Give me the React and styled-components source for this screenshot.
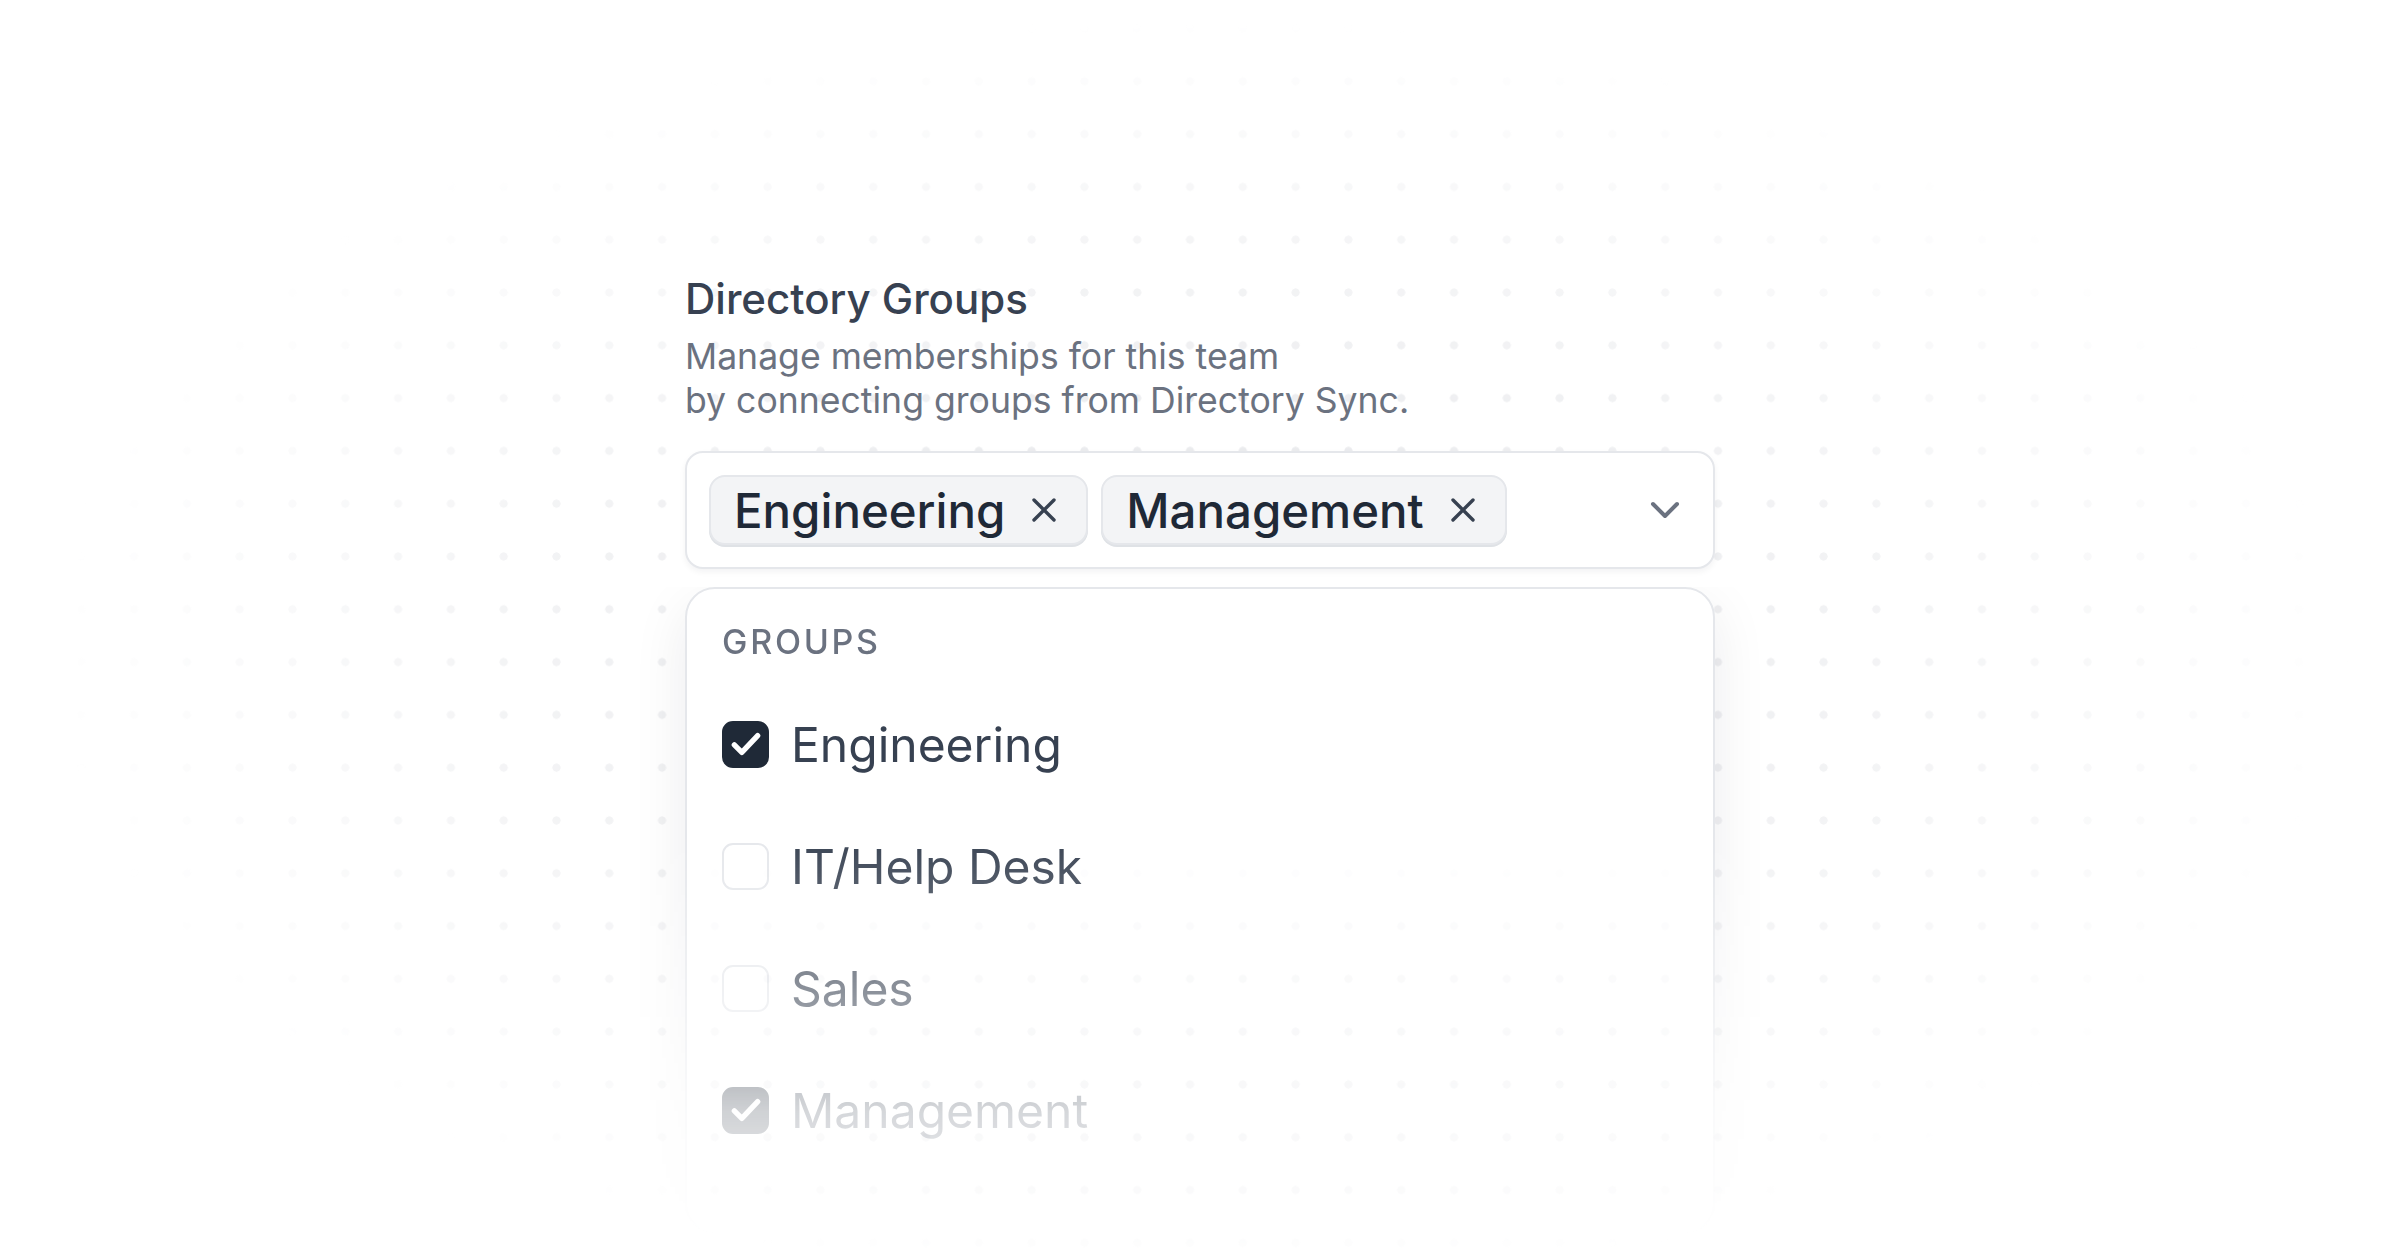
import React from 'react'
import styled, { createGlobalStyle } from 'styled-components'

const GlobalStyle = createGlobalStyle`
  html, body {
    margin: 0;
    background: #fff;
  }
  body {
    font-family: Inter, "Noto Sans", sans-serif;
    -webkit-font-smoothing: antialiased;
  }
`;

const Page = styled.div`
  position: relative;
  min-height: 100vh;
  overflow: hidden;

  &::before {
    content: '';
    position: absolute;
    inset: 0;
    background-image: radial-gradient(circle, #e7e8eb 3.8px, transparent 4.4px);
    background-size: 52.8px 52.8px;
    background-position: 2.1px 2.1px;
    mask-image: radial-gradient(ellipse 1150px 640px at 50% 50%, #000 20%, transparent 100%);
  }
`;

const Column = styled.div`
  position: relative;
  width: 1030px;
  margin: 0 auto;
  padding-top: 273px;
`;

const Title = styled.h2`
  margin: 0;
  font-size: 42px;
  line-height: 52px;
  font-weight: 500;
  color: #374151;
`;

const Subtitle = styled.p`
  margin: 10px 0 28px;
  font-size: 35.6px;
  line-height: 44px;
  color: #6b7280;
`;

const SelectBox = styled.div`
  display: flex;
  align-items: center;
  gap: 13px;
  padding: 22px 33px 22px 22px;
  border: 2px solid #e5e7eb;
  border-radius: 18px;
  background: #fff;
  box-shadow: 0 3px 6px rgba(17, 24, 39, 0.05);
`;

const Chip = styled.span`
  display: inline-flex;
  align-items: center;
  gap: 27px;
  height: 70px;
  box-sizing: border-box;
  padding: 0 30px 0 23px;
  background: #f3f4f6;
  border: 2px solid #e5e7eb;
  border-radius: 16px;
  box-shadow: 0 2px 0 #dfe2e6;
  font-size: 47.4px;
  font-weight: 500;
  color: #1f2937;
`;

const Chevron = styled.span`
  margin-left: auto;
  display: flex;
  color: #6b7280;
`;

const FadeWrap = styled.div`
  margin: 18px -80px 0;
  padding: 0 80px 80px;
  mask-image: linear-gradient(
    to bottom,
    #000 245px,
    rgba(0, 0, 0, 0.58) 403px,
    rgba(0, 0, 0, 0.21) 525px,
    transparent 650px
  );
`;

const Panel = styled.div`
  border: 2px solid #e5e7eb;
  border-radius: 30px;
  background: #fff;
  box-shadow: 0 18px 56px rgba(17, 24, 39, 0.08);
  padding: 32px 36px 60px 35px;
`;

const GroupLabel = styled.div`
  font-size: 34px;
  line-height: 41px;
  font-weight: 500;
  letter-spacing: 0.08em;
  color: #6b7280;
  margin-bottom: 21px;
`;

const Row = styled.div`
  display: flex;
  align-items: center;
  gap: 22px;
  height: 122px;
`;

const Box = styled.span`
  display: flex;
  align-items: center;
  justify-content: center;
  width: 47px;
  height: 47px;
  box-sizing: border-box;
  border-radius: 11px;
  border: 2px solid ${p => (p.$checked ? '#1f2937' : '#e5e7eb')};
  background: ${p => (p.$checked ? '#1f2937' : '#fff')};
`;

const ItemLabel = styled.span`
  font-size: 48px;
  font-weight: 400;
  color: #374151;
`;

const XIcon = () => (
  <svg width="24" height="24" viewBox="0 0 24 24" fill="none" stroke="#374151" strokeWidth="3.4" strokeLinecap="round">
    <path d="M2 2l20 20M22 2L2 22" />
  </svg>
);

const ChevronIcon = () => (
  <svg width="30" height="18" viewBox="0 0 30 18" fill="none" stroke="currentColor" strokeWidth="4" strokeLinecap="round" strokeLinejoin="round">
    <path d="M3 3l12 12L27 3" />
  </svg>
);

const Check = () => (
  <svg width="40" height="40" viewBox="0 0 24 24" fill="none" stroke="#fff" strokeWidth="3.2" strokeLinecap="round" strokeLinejoin="round">
    <path d="M5 12.5l4.5 4.5L19 7" />
  </svg>
);

const groups = [
  { name: 'Engineering', checked: true },
  { name: 'IT/Help Desk', checked: false },
  { name: 'Sales', checked: false },
  { name: 'Management', checked: true },
];

const selected = groups.filter(g => g.checked);

export default function App() {
  return (
    <Page>
      <GlobalStyle />
      <Column>
        <Title>Directory Groups</Title>
        <Subtitle>
          Manage memberships for this team
          <br />
          by connecting groups from Directory Sync.
        </Subtitle>

        <SelectBox>
          {selected.map(g => (
            <Chip key={g.name}>
              {g.name}
              <XIcon />
            </Chip>
          ))}
          <Chevron>
            <ChevronIcon />
          </Chevron>
        </SelectBox>

        <FadeWrap>
          <Panel>
            <GroupLabel>GROUPS</GroupLabel>
            {groups.map(g => (
              <Row key={g.name}>
                <Box $checked={g.checked}>{g.checked && <Check />}</Box>
                <ItemLabel>{g.name}</ItemLabel>
              </Row>
            ))}
          </Panel>
        </FadeWrap>
      </Column>
    </Page>
  )
}
